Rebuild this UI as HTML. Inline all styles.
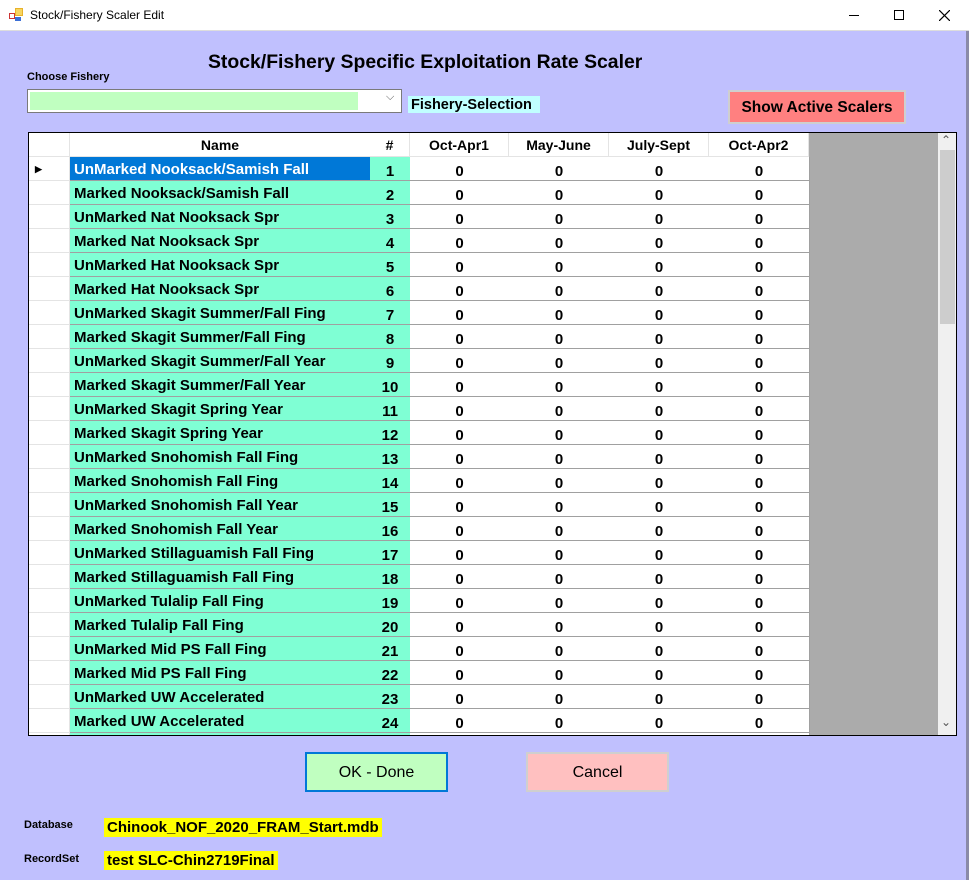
<!DOCTYPE html>
<html><head><style>
*{margin:0;padding:0;box-sizing:border-box}
body{width:969px;height:880px;position:relative;background:#c0c0fe;font-family:"Liberation Sans",Arial,sans-serif;overflow:hidden}
.a{position:absolute}
.tb{left:0;top:0;width:969px;height:31px;background:#fff;border-bottom:1px solid #ddd}
.grid{left:28px;top:132px;width:929px;height:604px;border:1px solid #000;background:#ababab;overflow:hidden}
.c{position:absolute;height:24px;border-right:1px solid #a0a0a0;border-bottom:1px solid #a0a0a0;font-weight:bold;font-size:15px;line-height:24px;text-align:center;background:#fff}
.n{background:#7fffd4;text-align:left;padding-left:4px;line-height:26px}
.h{border-color:#e4e4e4;line-height:24px;font-size:14px}
.rh{border-right:1px solid #e4e4e4;border-bottom:1px solid #e4e4e4}
</style></head><body>
<div class="a tb">
 <svg class="a" style="left:9px;top:8px" width="16" height="14"><rect x="0" y="5" width="6" height="6" fill="#c33"/><rect x="1" y="6" width="4" height="4" fill="#fff"/><rect x="6" y="0" width="8" height="8" fill="#e8b22a"/><rect x="7" y="1" width="6" height="6" fill="#f7d560"/><rect x="6" y="9" width="6" height="4" fill="#3c6fd6"/></svg>
 <div class="a" style="left:30px;top:8px;font-size:12px">Stock/Fishery Scaler Edit</div>
 <div class="a" style="left:849px;top:15px;width:10px;height:1px;background:#000"></div>
 <div class="a" style="left:894px;top:10px;width:10px;height:10px;border:1px solid #000"></div>
 <svg class="a" style="left:939px;top:10px" width="11" height="11"><path d="M0 0L11 11M11 0L0 11" stroke="#000" stroke-width="1.2"/></svg>
</div>
<div class="a" style="left:966px;top:31px;width:3px;height:849px;background:#8a8aa8"></div>
<div class="a" style="left:208px;top:51px;font-size:19.4px;font-weight:bold">Stock/Fishery Specific Exploitation Rate Scaler</div>
<div class="a" style="left:27px;top:71px;font-size:11px;font-weight:bold">Choose Fishery</div>
<div class="a" style="left:27px;top:89px;width:375px;height:24px;border:1px solid #7a7a7a;background:#fff">
 <div class="a" style="left:2px;top:2px;width:328px;height:18px;background:#c0ffc0"></div>
 <div class="a" style="left:358px;top:1px;font-size:11px;color:#555">⌵</div>
</div>
<div class="a" style="left:408px;top:96px;width:132px;height:17px;background:#c0ffff;font-size:14.5px;font-weight:bold;padding-left:3px;line-height:19px;white-space:nowrap">Fishery-Selection</div>
<div class="a" style="left:728px;top:90px;width:178px;height:34px;border:2px solid #cfcfcf;background:#ff8080;font-size:15.5px;font-weight:bold;text-align:center;line-height:32px">Show Active Scalers</div>
<div class="a grid" id="g"></div>
<div class="a" style="left:305px;top:752px;width:143px;height:40px;border:2px solid #0078d7;background:#c0ffc0;font-size:16px;text-align:center;line-height:38px">OK - Done</div>
<div class="a" style="left:526px;top:752px;width:143px;height:40px;border:2px solid #cfcfcf;background:#ffc0c0;font-size:16px;text-align:center;line-height:38px">Cancel</div>
<div class="a" style="left:24px;top:819px;font-size:11px;font-weight:bold">Database</div>
<div class="a" style="left:104px;top:818px;height:19px;padding:0 3px;background:#ffff00;font-size:15px;font-weight:bold;line-height:20px">Chinook_NOF_2020_FRAM_Start.mdb</div>
<div class="a" style="left:24px;top:853px;font-size:11px;font-weight:bold">RecordSet</div>
<div class="a" style="left:104px;top:851px;height:19px;padding:0 3px;background:#ffff00;font-size:15px;font-weight:bold;line-height:20px">test SLC-Chin2719Final</div>
<script>
var names=["UnMarked Nooksack/Samish Fall","Marked Nooksack/Samish Fall","UnMarked Nat Nooksack Spr","Marked Nat Nooksack Spr","UnMarked Hat Nooksack Spr","Marked Hat Nooksack Spr","UnMarked Skagit Summer/Fall Fing","Marked Skagit Summer/Fall Fing","UnMarked Skagit Summer/Fall Year","Marked Skagit Summer/Fall Year","UnMarked Skagit Spring Year","Marked Skagit Spring Year","UnMarked Snohomish Fall Fing","Marked Snohomish Fall Fing","UnMarked Snohomish Fall Year","Marked Snohomish Fall Year","UnMarked Stillaguamish Fall Fing","Marked Stillaguamish Fall Fing","UnMarked Tulalip Fall Fing","Marked Tulalip Fall Fing","UnMarked Mid PS Fall Fing","Marked Mid PS Fall Fing","UnMarked UW Accelerated","Marked UW Accelerated"];
var cols=[[0,41],[41,301],[341,40],[381,99],[480,100],[580,100],[680,100]];
var hd=["","Name","#","Oct-Apr1","May-June","July-Sept","Oct-Apr2"];
var h="";
for(var j=0;j<7;j++)h+='<div class="c h" style="left:'+cols[j][0]+'px;top:0;width:'+cols[j][1]+'px">'+hd[j]+'</div>';
for(var i=0;i<25;i++){var t=24+i*24;var nm=names[i]||"";
 h+='<div class="c rh" style="left:0;top:'+t+'px;width:41px;text-align:left;padding-left:6px;font-size:9px">'+(i==0?'▶':'')+'</div>';
 h+='<div class="c n" style="left:41px;top:'+t+'px;width:301px;'+(i==0?'background:#0078d7;color:#fff;':'')+'">'+nm+'</div>';
 h+='<div class="c" style="left:341px;top:'+t+'px;width:41px;background:#7fffd4;line-height:29px">'+(i<24?i+1:'')+'</div>';
 for(var j=3;j<7;j++)h+='<div class="c" style="left:'+cols[j][0]+'px;top:'+t+'px;width:'+(cols[j][1]+1)+'px;line-height:29px">'+(i<24?'0':'')+'</div>';
}
h+='<div class="a" style="left:909px;top:0;width:18px;height:602px;background:#f0f0f0"></div>';
h+='<div class="a" style="left:911px;top:17px;width:15px;height:174px;background:#cdcdcd"></div>';
h+='<div class="a" style="left:912px;top:0;font-size:12px;color:#555">⌃</div>';
h+='<div class="a" style="left:912px;top:582px;font-size:12px;color:#555">⌄</div>';
document.getElementById("g").innerHTML=h;
</script>
</body></html>
